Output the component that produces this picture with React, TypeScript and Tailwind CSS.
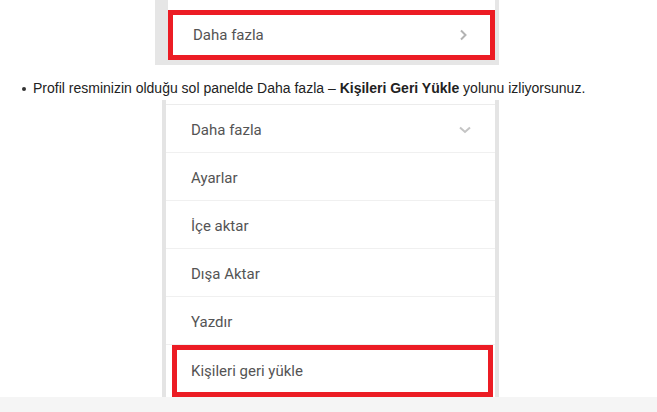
const ROWS = ["Ayarlar", "İçe aktar", "Dışa Aktar", "Yazdır"];

function ChevronRight() {
  return (
    <svg width="10" height="12" viewBox="0 0 10 12" fill="none">
      <path d="M3 1.5 L7.5 6 L3 10.5" stroke="#b3b3b3" strokeWidth="2" />
    </svg>
  );
}

function ChevronDown() {
  return (
    <svg width="12" height="8" viewBox="0 0 12 8" fill="none">
      <path d="M1 1.5 L6 6 L11 1.5" stroke="#c4c4c4" strokeWidth="2" />
    </svg>
  );
}

export default function App() {
  return (
    <div className="w-[657px] h-[412px] bg-white flex flex-col overflow-hidden font-['Roboto',sans-serif]">
      {/* top screenshot crop */}
      <div className="ml-[155px] w-[344px] h-[65px] bg-[#e6e6e6] pl-[13px] pr-[4px] pb-[5px] shrink-0">
        <div className="bg-white h-full pt-[10px]">
          <div className="h-[50px] border-[5px] border-[#ec1c24] flex items-center justify-between pl-[20px] pr-[22px]">
            <span className="text-[15px] text-[#545454]">Daha fazla</span>
            <ChevronRight />
          </div>
        </div>
      </div>

      {/* bullet text */}
      <div className="flex items-center h-[35px] pt-[12px] pl-[22px] font-['Liberation_Sans',Arial,sans-serif] text-[14px] text-[#222]">
        <span className="w-[4px] h-[4px] rounded-full bg-[#333] mr-[7px]" />
        <span>
          Profil resminizin olduğu sol panelde Daha fazla – <b>Kişileri Geri Yükle</b> yolunu izliyorsunuz.
        </span>
      </div>

      {/* bottom screenshot crop */}
      <div className="ml-[162px] w-[337px] h-[297px] border-x-4 border-[#e4e4e4] bg-white pt-[4px] shrink-0 flex flex-col">
        <div className="border-t border-[#ececec]" />
        <div className="h-[48px] pt-[3px] border-b border-[#f0f0f0] flex items-center justify-between pl-[25px] pr-[24px]">
          <span className="text-[15px] text-[#545454]">Daha fazla</span>
          <ChevronDown />
        </div>
        {ROWS.map((label) => (
          <div key={label} className="h-[48px] pt-[3px] border-b border-[#f0f0f0] flex items-center pl-[25px] last:border-b-0 last:h-[46px]">
            <span className="text-[15px] text-[#545454]">{label}</span>
          </div>
        ))}
        <div className="ml-[6px] mr-[2px] flex-1 border-[5px] border-[#ec1c24] flex items-center pl-[14px] pt-[1px]">
          <span className="text-[15px] text-[#545454]">Kişileri geri yükle</span>
        </div>
      </div>

      <div className="flex-1 bg-[#f5f5f5]" />
    </div>
  );
}
